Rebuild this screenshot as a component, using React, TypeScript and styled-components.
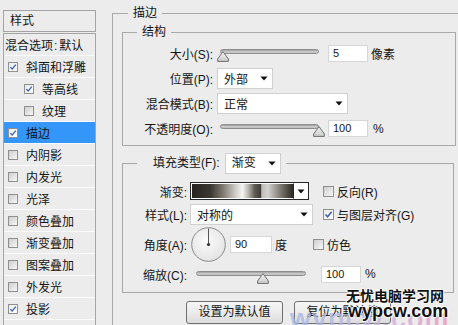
import React from "react";
import styled, { createGlobalStyle } from "styled-components";

const Global = createGlobalStyle`
  html, body { margin: 0; padding: 0; background: #ececec; }
  body {
    font-family: "Liberation Sans", "Noto Sans CJK SC", sans-serif;
    font-size: 12px;
    color: #151515;
  }
  * { box-sizing: border-box; }
`;

const Screen = styled.div`
  position: relative;
  width: 458px;
  height: 325px;
  overflow: hidden;
  display: flex;
  align-items: flex-start;
  background: #ececec;
`;

/* ---------- left list ---------- */
const Sidebar = styled.div`
  flex: none;
  margin: 10px 0 0 3px;
  width: 93px;
  display: flex;
  flex-direction: column;
  gap: 1px;
`;

const SideHeader = styled.div`
  height: 22px;
  border: 1px solid #a4a4a4;
  line-height: 20px;
  padding-left: 6px;
`;

const SideList = styled.div`
  height: 310px;
  border: 1px solid #a4a4a4;
  display: flex;
  flex-direction: column;
`;

const SideRow = styled.div<{ $indent?: boolean; $active?: boolean; $plain?: boolean }>`
  flex: none;
  height: 22px;
  border-bottom: 1px solid #fbfbfb;
  display: flex;
  align-items: center;
  gap: 8px;
  padding-left: ${(p) => (p.$plain ? 1 : p.$indent ? 20 : 4)}px;
  background: ${(p) => (p.$active ? "#3396f8" : "transparent")};
  white-space: nowrap;
`;

const Colon = styled.span`
  margin: 0 2px 0 1px;
`;

/* ---------- checkbox ---------- */
const Box = styled.span<{ $size: number; $checked: boolean }>`
  flex: none;
  display: inline-flex;
  align-items: center;
  justify-content: center;
  width: ${(p) => p.$size}px;
  height: ${(p) => p.$size}px;
  border: 1px solid #8f9090;
  background: ${(p) =>
    p.$checked
      ? "linear-gradient(135deg, #e9e9e9, #ffffff)"
      : "linear-gradient(135deg, #cfcfcf, #f7f7f7)"};
  svg { display: block; }
`;

const Check = ({ checked, size = 11 }: { checked?: boolean; size?: number }) => (
  <Box $size={size} $checked={!!checked}>
    {checked && (
      <svg width={size - 2} height={size - 2} viewBox="0 0 9 9">
        <path d="M1.5 4.6 L3.6 6.8 L7.6 1.8" fill="none" stroke="#3c5fae" strokeWidth="1.5" />
      </svg>
    )}
  </Box>
);

/* ---------- main ---------- */
const Main = styled.div`
  flex: none;
  margin-left: 16px;
  width: 360px;
`;

const Frame = styled.fieldset<{ $w?: number; $mt?: number; $open?: boolean }>`
  margin: ${(p) => p.$mt ?? 0}px 0 0 0;
  padding: 0;
  min-width: 0;
  width: ${(p) => (p.$w ? `${p.$w}px` : "auto")};
  border: 1px solid #a9a9a9;
  border-right: ${(p) => (p.$open ? "none" : "1px solid #a9a9a9")};
`;

const Legend = styled.legend<{ $ml: number; $pl?: number }>`
  margin-left: ${(p) => p.$ml}px;
  padding: 0 5px 0 ${(p) => p.$pl ?? 5}px;
  line-height: 16px;
  font-size: 12px;
`;

const OuterBody = styled.div`
  padding: 3px 0 40px 9px;
`;

const StructBody = styled.div`
  padding: 3px 0 6px 0;
  display: flex;
  flex-direction: column;
  gap: 4px;
`;

const FillBody = styled.div`
  padding: 8px 0 9px 0;
  display: flex;
  flex-direction: column;
`;

const Row = styled.div<{ $h?: number; $mt?: number }>`
  display: flex;
  align-items: center;
  height: ${(p) => p.$h ?? 21}px;
  margin-top: ${(p) => p.$mt ?? 0}px;
  white-space: nowrap;
`;

const Label = styled.span<{ $w: number }>`
  flex: none;
  width: ${(p) => p.$w}px;
  text-align: right;
`;

const LegendRow = styled.div`
  display: flex;
  align-items: center;
  gap: 5px;
  height: 22px;
`;

const Gap = styled.span<{ $w: number }>`
  flex: none;
  width: ${(p) => p.$w}px;
`;

const Unit = styled.span`
  flex: none;
`;

const Num = styled.div<{ $w?: number }>`
  flex: none;
  width: ${(p) => p.$w ?? 40}px;
  height: 17px;
  border: 1px solid #d6d6d6;
  background: #fff;
  padding-left: 4px;
  font-size: 11px;
  line-height: 15px;
`;

/* dropdown */
const SelectBox = styled.div<{ $w: number; $pl?: number }>`
  flex: none;
  width: ${(p) => p.$w}px;
  height: 21px;
  border: 1px solid #d0d0d0;
  background: #fff;
  display: flex;
  align-items: center;
  justify-content: space-between;
  padding: 0 4px 0 ${(p) => p.$pl ?? 6}px;
`;

const Arrow = () => (
  <svg width="8" height="5" viewBox="0 0 8 5">
    <path d="M0.5 0.5 H7.5 L4 4.5 Z" fill="#111" />
  </svg>
);

const Select = ({ w, text, pl }: { w: number; text: string; pl?: number }) => (
  <SelectBox $w={w} $pl={pl}>
    <span>{text}</span>
    <Arrow />
  </SelectBox>
);

/* slider */
const SliderWrap = styled.div<{ $w: number }>`
  position: relative;
  flex: none;
  width: ${(p) => p.$w + 6}px;
  height: 100%;
`;

const Track = styled.div<{ $w: number }>`
  margin-top: 6px;
  margin-left: 1px;
  width: ${(p) => p.$w}px;
  height: 5px;
  border-radius: 3px;
  border: 1px solid #8e8e8e;
  background: linear-gradient(to bottom, #9c9c9c 0%, #cfcfcf 60%, #bdbdbd 100%);
`;

const Thumb = styled.svg`
  position: absolute;
  top: 8px;
`;

const Slider = ({ w, value }: { w: number; value: number }) => (
  <SliderWrap $w={w}>
    <Track $w={w} />
    <Thumb width="12" height="11" viewBox="0 0 12 11" style={{ left: 1 + value * w - 6 }}>
      <defs>
        <linearGradient id="tg" x1="0" y1="0" x2="0" y2="1">
          <stop offset="0" stopColor="#f4f4f4" />
          <stop offset="1" stopColor="#c9c9c9" />
        </linearGradient>
      </defs>
      <path d="M6 0.6 L11.4 8 V10.4 H0.6 V8 Z" fill="url(#tg)" stroke="#6f6f6f" strokeWidth="1" strokeLinejoin="round" />
    </Thumb>
  </SliderWrap>
);

/* gradient picker */
const GradPick = styled.div`
  flex: none;
  display: flex;
  width: 119px;
  height: 18px;
  border: 1px solid #262626;
  background: #fff;
`;

const GradBar = styled.div`
  flex: 1;
  border: 1px solid #fff;
  border-right: 1px solid #262626;
  background: linear-gradient(
    to right,
    #262320 0%,
    #3a3732 18%,
    #7a756d 30%,
    #c8c6c0 42%,
    #f4f4f2 50%,
    #b5b2ab 56%,
    #5e5a54 62%,
    #403c37 68%,
    #bdbcb8 69%,
    #d4d3d0 75%,
    #7a7670 88%,
    #2c2925 100%
  );
`;

const GradBtn = styled.div`
  flex: none;
  width: 14px;
  display: flex;
  align-items: center;
  justify-content: center;
`;

const CheckLabel = styled.span`
  flex: none;
  display: inline-flex;
  align-items: center;
  gap: 3px;
`;

const Dial = () => (
  <svg width="35" height="35" viewBox="0 0 35 35">
    <defs>
      <radialGradient id="dg" cx="0.45" cy="0.4" r="0.6">
        <stop offset="0" stopColor="#fbfbfb" />
        <stop offset="1" stopColor="#e4e4e4" />
      </radialGradient>
    </defs>
    <circle cx="17.5" cy="17.5" r="16.8" fill="url(#dg)" stroke="#8a8a8a" strokeWidth="1" />
    <line x1="17.5" y1="17.5" x2="17.5" y2="1.5" stroke="#555" strokeWidth="1" />
    <circle cx="17.5" cy="17.5" r="1.6" fill="#333" />
  </svg>
);

const Buttons = styled.div`
  display: flex;
  gap: 11px;
  margin-top: 8px;
  padding-left: 64px;
`;

const Button = styled.div`
  flex: none;
  width: 97px;
  height: 23px;
  border: 1px solid #707070;
  border-radius: 3px;
  background: linear-gradient(to bottom, #f6f6f6 0%, #ebebeb 50%, #dcdcdc 100%);
  text-align: center;
  line-height: 21px;
  font-size: 12px;
`;

/* watermark */
const Watermark = styled.div`
  position: absolute;
  left: 346px;
  top: 288px;
  pointer-events: none;
`;

const WmGhost = styled.div`
  position: absolute;
  left: -56px;
  top: 16px;
  font-family: "Liberation Sans", sans-serif;
  font-weight: bold;
  font-size: 27px;
  letter-spacing: 1px;
  background: linear-gradient(to right, #9fb4e4, #c9b6e0 55%, #ee8fbd);
  -webkit-background-clip: text;
  background-clip: text;
  color: transparent;
  opacity: 0.75;
`;

const WmCn = styled.div`
  position: relative;
  font-family: "Noto Sans CJK SC", sans-serif;
  font-weight: bold;
  font-size: 14px;
  line-height: 15px;
  color: #111;
  text-shadow: 1px 0 #fff, -1px 0 #fff, 0 1px #fff, 0 -1px #fff;
`;

const WmEn = styled.div`
  position: relative;
  margin-left: 2px;
  font-family: "Liberation Sans", sans-serif;
  font-weight: bold;
  font-size: 18px;
  line-height: 17px;
  color: #111;
  text-shadow: 1px 0 #fff, -1px 0 #fff, 0 1px #fff, 0 -1px #fff;
`;

const sideItems: { label: string; checked?: boolean; indent?: boolean; active?: boolean }[] = [
  { label: "斜面和浮雕", checked: true },
  { label: "等高线", checked: true, indent: true },
  { label: "纹理", indent: true },
  { label: "描边", checked: true, active: true },
  { label: "内阴影" },
  { label: "内发光" },
  { label: "光泽" },
  { label: "颜色叠加" },
  { label: "渐变叠加" },
  { label: "图案叠加" },
  { label: "外发光" },
  { label: "投影", checked: true },
];

export default function App() {
  return (
    <>
      <Global />
      <Screen>
        <Sidebar>
          <SideHeader>样式</SideHeader>
          <SideList>
            <SideRow $plain>
              <span>
                混合选项<Colon>:</Colon>默认
              </span>
            </SideRow>
            {sideItems.map((it) => (
              <SideRow key={it.label} $indent={it.indent} $active={it.active}>
                <Check checked={it.checked} size={10} />
                <span>{it.label}</span>
              </SideRow>
            ))}
          </SideList>
        </Sidebar>

        <Main>
          <Frame $mt={5} $open>
            <Legend $ml={15}>描边</Legend>
            <OuterBody>
              <Frame $w={334}>
                <Legend $ml={14}>结构</Legend>
                <StructBody>
                  <Row>
                    <Label $w={90}>大小(S):</Label>
                    <Gap $w={6} />
                    <Slider w={99} value={0.03} />
                    <Gap $w={4} />
                    <Num>5</Num>
                    <Gap $w={3} />
                    <Unit>像素</Unit>
                  </Row>
                  <Row>
                    <Label $w={90}>位置(P):</Label>
                    <Gap $w={4} />
                    <Select w={56} text="外部" />
                  </Row>
                  <Row>
                    <Label $w={90}>混合模式(B):</Label>
                    <Gap $w={4} />
                    <Select w={131} text="正常" />
                  </Row>
                  <Row>
                    <Label $w={90}>不透明度(O):</Label>
                    <Gap $w={6} />
                    <Slider w={99} value={1} />
                    <Gap $w={4} />
                    <Num>100</Num>
                    <Gap $w={5} />
                    <Unit>%</Unit>
                  </Row>
                </StructBody>
              </Frame>

              <Frame $w={332} $mt={6}>
                <Legend $ml={14} $pl={16}>
                  <LegendRow>
                    <span>填充类型(F):</span>
                    <Select w={56} text="渐变" />
                  </LegendRow>
                </Legend>
                <FillBody>
                  <Row $h={18}>
                    <Label $w={64}>渐变:</Label>
                    <Gap $w={3} />
                    <GradPick>
                      <GradBar />
                      <GradBtn>
                        <Arrow />
                      </GradBtn>
                    </GradPick>
                    <Gap $w={14} />
                    <CheckLabel>
                      <Check />
                      反向(R)
                    </CheckLabel>
                  </Row>
                  <Row $mt={4}>
                    <Label $w={64}>样式(L):</Label>
                    <Gap $w={3} />
                    <Select w={123} text="对称的" />
                    <Gap $w={10} />
                    <CheckLabel>
                      <Check checked />
                      与图层对齐(G)
                    </CheckLabel>
                  </Row>
                  <Row $h={35} $mt={2}>
                    <Label $w={64}>角度(A):</Label>
                    <Gap $w={4} />
                    <Dial />
                    <Gap $w={4} />
                    <Num $w={42}>90</Num>
                    <Gap $w={3} />
                    <Unit>度</Unit>
                    <Gap $w={26} />
                    <CheckLabel>
                      <Check />
                      仿色
                    </CheckLabel>
                  </Row>
                  <Row $h={18} $mt={3}>
                    <Label $w={64}>缩放(C):</Label>
                    <Gap $w={8} />
                    <Slider w={110} value={0.61} />
                    <Gap $w={10} />
                    <Num>100</Num>
                    <Gap $w={4} />
                    <Unit>%</Unit>
                  </Row>
                </FillBody>
              </Frame>

              <Buttons>
                <Button>设置为默认值</Button>
                <Button>复位为默认值</Button>
              </Buttons>
            </OuterBody>
          </Frame>
        </Main>

        <Watermark>
          <WmGhost>wypcw.com</WmGhost>
          <WmCn>无忧电脑学习网</WmCn>
          <WmEn>wypcw.com</WmEn>
        </Watermark>
      </Screen>
    </>
  );
}
